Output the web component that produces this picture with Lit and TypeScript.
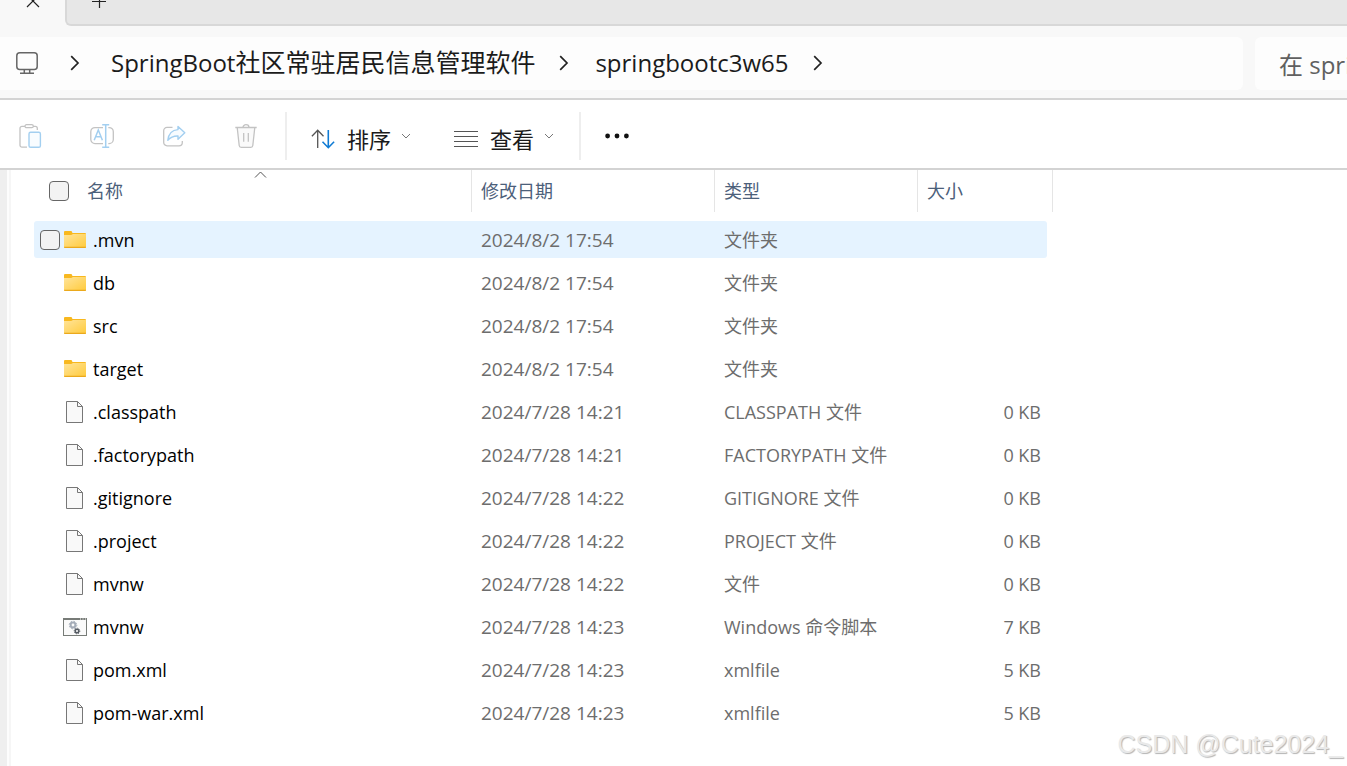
import { LitElement, html, css, svg, nothing } from "lit";
import { customElement, property } from "lit/decorators.js";

type Kind = "folder" | "file" | "script";

interface Entry {
  name: string;
  kind: Kind;
  modified: string;
  type: string;
  size: string;
  hovered?: boolean;
}

const ENTRIES: Entry[] = [
  { name: ".mvn", kind: "folder", modified: "2024/8/2 17:54", type: "文件夹", size: "", hovered: true },
  { name: "db", kind: "folder", modified: "2024/8/2 17:54", type: "文件夹", size: "" },
  { name: "src", kind: "folder", modified: "2024/8/2 17:54", type: "文件夹", size: "" },
  { name: "target", kind: "folder", modified: "2024/8/2 17:54", type: "文件夹", size: "" },
  { name: ".classpath", kind: "file", modified: "2024/7/28 14:21", type: "CLASSPATH 文件", size: "0 KB" },
  { name: ".factorypath", kind: "file", modified: "2024/7/28 14:21", type: "FACTORYPATH 文件", size: "0 KB" },
  { name: ".gitignore", kind: "file", modified: "2024/7/28 14:22", type: "GITIGNORE 文件", size: "0 KB" },
  { name: ".project", kind: "file", modified: "2024/7/28 14:22", type: "PROJECT 文件", size: "0 KB" },
  { name: "mvnw", kind: "file", modified: "2024/7/28 14:22", type: "文件", size: "0 KB" },
  { name: "mvnw", kind: "script", modified: "2024/7/28 14:23", type: "Windows 命令脚本", size: "7 KB" },
  { name: "pom.xml", kind: "file", modified: "2024/7/28 14:23", type: "xmlfile", size: "5 KB" },
  { name: "pom-war.xml", kind: "file", modified: "2024/7/28 14:23", type: "xmlfile", size: "5 KB" },
];

const GRAY = "#c3c3c3";
const BLUE = "#a3cff0";

const icon = (w: number, h: number, body: unknown) =>
  html`<svg width=${w} height=${h} viewBox="0 0 ${w} ${h}" fill="none" aria-hidden="true">${body}</svg>`;

const folderIcon = icon(22, 17, svg`
  <defs><linearGradient id="f" x1="0" y1="0" x2="1" y2="1">
    <stop offset="0" stop-color="#ffe49a"/><stop offset="1" stop-color="#ffcb3d"/>
  </linearGradient></defs>
  <path d="M0 4V1a1 1 0 0 1 1-1h6.5L8.5 2H21a1 1 0 0 1 1 1V4z" fill="#f8b81f"/>
  <path d="M0 4h7.2L9 3h13v13.5H0z" fill="url(#f)"/>
  <path d="M0 15.8h22v.4a.8.8 0 0 1-.8.8H.8a.8.8 0 0 1-.8-.8z" fill="#eba91c"/>`);

const fileIcon = icon(18, 22, svg`
  <path d="M.5.5h11l5 5v16H.5z" fill="#f9f9f9" stroke="#777"/>
  <path d="M11.5.5v5h5" stroke="#777"/>`);

const scriptIcon = icon(24, 18, svg`
  <rect x=".5" y=".5" width="23" height="17" fill="#fafafa" stroke="#777b77"/>
  <path d="M0 1h24" stroke="#777b77" stroke-width="2"/>
  <path d="M17 1h1M19.5 1h1M22 1h1" stroke="#fff"/>
  <circle cx="10" cy="7" r="2.4" stroke="#a4acb8" stroke-width="2"/>
  <circle cx="10" cy="7" r="3.8" stroke="#a4acb8" stroke-dasharray="1.5 1.5"/>
  <circle cx="14" cy="13" r="1.8" stroke="#555b63" stroke-width="1.5"/>
  <circle cx="14" cy="13" r="2.8" stroke="#555b63" stroke-dasharray="1.1 1.1"/>`);

const ICONS: Record<Kind, unknown> = { folder: folderIcon, file: fileIcon, script: scriptIcon };

const crumbChevron = icon(10, 16, svg`<path d="M1.2 1.2 8 8l-6.8 6.8" stroke="#222" stroke-width="1.7"/>`);
const dropChevron = icon(10, 6, svg`<path d="M1 1l4 4 4-4" stroke="#777"/>`);

const pasteIcon = icon(24, 24, svg`
  <path d="M9 23.2H4a2 2 0 0 1-2-2V4.3a2 2 0 0 1 2-2h3M15 2.3h2.3a2 2 0 0 1 2 2V6" stroke=${GRAY} stroke-width="1.3"/>
  <rect x="7" y=".7" width="8.3" height="3" rx="1.5" stroke=${GRAY} stroke-width="1.3"/>
  <rect x="11" y="8.3" width="11.4" height="15" rx="1.6" stroke=${BLUE} stroke-width="1.4" fill="#f8fcff"/>`);

const renameIcon = icon(24, 24, svg`
  <path d="M13 3.6H5a4.2 4.2 0 0 0-4.2 4.2v7.6A4.2 4.2 0 0 0 5 19.6h8M18.3 3.6h.8a4.2 4.2 0 0 1 4.2 4.2v7.6a4.2 4.2 0 0 1-4.2 4.2h-.8" stroke=${GRAY} stroke-width="1.3"/>
  <path d="M15.7.7v22.6M12.2.7h7M12.2 23.3h7M4.2 16.2 8.3 6l4.1 10.2M5.6 12.8h5.4" stroke=${BLUE} stroke-width="1.5"/>`);

const shareIcon = icon(24, 24, svg`
  <path d="M10.5 3.4H5a3.3 3.3 0 0 0-3.3 3.3v11.8A3.3 3.3 0 0 0 5 21.8h12a3.3 3.3 0 0 0 3.3-3.3V17" stroke=${GRAY} stroke-width="1.3"/>
  <path d="M16 2.4 22.8 8.8 16 15.2V12c-4.2-.2-7.3 1-10.2 4.3C6.5 10 10 6 16 5.6z" stroke=${BLUE} stroke-width="1.4" stroke-linejoin="round" fill="#f8fcff"/>`);

const trashIcon = icon(24, 24, svg`
  <path d="M3.2 3.5 5.2 21.5a2 2 0 0 0 2 1.8h9.6a2 2 0 0 0 2-1.8L20.8 3.5" fill="#fafafa"/>
  <path d="M1.3 3.5h21.4M3.2 3.5 5.2 21.5a2 2 0 0 0 2 1.8h9.6a2 2 0 0 0 2-1.8L20.8 3.5M9 3.5a3 2.8 0 0 1 6 0M9.7 9v8.8M14.3 9v8.8" stroke=${GRAY} stroke-width="1.3"/>`);

const sortIcon = icon(24, 20, svg`
  <path d="M6.7 19V1.2M.9 7.2l5.8-6 5.8 6" stroke="#555" stroke-width="1.3"/>
  <path d="M17.3 1v17.6M11.5 12.7l5.8 6 5.8-6" stroke="#0f7bd4" stroke-width="1.6"/>`);

const listIcon = icon(24, 16, svg`
  <path d="M0 .5h24M0 5.5h24M0 10.5h24M0 15.5h24" stroke="#555"/>`);

const moreIcon = icon(24, 6, svg`
  <circle cx="2.6" cy="3" r="2.4" fill="#111"/><circle cx="12" cy="3" r="2.4" fill="#111"/><circle cx="21.4" cy="3" r="2.4" fill="#111"/>`);

const monitorIcon = icon(22, 22, svg`
  <rect x=".8" y=".8" width="20.4" height="16.6" rx="3" stroke="#666" stroke-width="1.5"/>
  <path d="M8.3 17.5v3.5M13.7 17.5v3.5M4 21.2h14" stroke="#666" stroke-width="1.5"/>`);

const closeIcon = icon(14, 14, svg`<path d="M1 1l12 12M13 1 1 13" stroke="#222" stroke-width="1.2"/>`);
const plusIcon = icon(14, 14, svg`<path d="M0 7.5h14M7.5 0v14" stroke="#222" stroke-width="1.2"/>`);

const controls = css`
  :host, * { box-sizing: border-box; }
  svg { display: block; flex: none; }
  button {
    display: flex; align-items: center; margin: 0; padding: 0;
    border: 0; background: none; font: inherit; color: inherit;
  }
`;

@customElement("explorer-tabs")
class ExplorerTabs extends LitElement {
  static styles = [controls, css`
    :host { display: flex; height: 26px; background: #f8f8f8; }
    .current { flex: 0 0 65px; display: flex; padding-left: 26px; overflow: hidden; }
    .rest {
      flex: 1; display: flex; padding-left: 25px; overflow: hidden;
      background: #e7e7e7; border: 2px solid #d8d8d8;
      border-width: 0 0 2px 2px; border-radius: 0 0 0 6px;
    }
    button { height: 14px; margin-top: -6px; }
  `];

  render() {
    return html`
      <div class="current"><button aria-label="关闭">${closeIcon}</button></div>
      <div class="rest"><button aria-label="新建">${plusIcon}</button></div>`;
  }
}

@customElement("explorer-address")
class ExplorerAddress extends LitElement {
  static styles = [controls, css`
    :host {
      display: flex; gap: 12px; padding: 11px 0 8px;
      background: #f8f8f8; border-bottom: 2px solid #d3d3d3;
      font-size: 24px; line-height: 33px; color: #1b1b1b;
    }
    .path {
      flex: 1; min-width: 0; height: 53px; display: flex; align-items: center;
      padding: 0 0 2px 16px; background: #fdfdfd; border-radius: 0 6px 6px 0;
      white-space: nowrap;
    }
    .path a { color: inherit; text-decoration: none; }
    .pc { margin-right: 32px; }
    .crumb { margin: 0 24px 0 26px; }
    .pc + svg + .crumb { margin-left: 31px; }
    .han { font-size: 25px; }
    .search {
      flex: 0 0 92px; width: 92px; height: 53px; padding: 2px 0 0 24px;
      border: 0; border-radius: 6px 0 0 6px; background: #fdfdfd;
      font: inherit; outline: 0;
    }
    .search::placeholder { color: #606060; opacity: 1; }
  `];

  render() {
    return html`
      <nav class="path" aria-label="地址">
        <a class="pc" href="#" aria-label="此电脑">${monitorIcon}</a>
        ${crumbChevron}<a class="crumb" href="#">SpringBoot<span class="han">社区常驻居民信息管理软件</span></a>
        ${crumbChevron}<a class="crumb" href="#">springbootc3w65</a>
        ${crumbChevron}
      </nav>
      <input class="search" type="text" aria-label="搜索" placeholder="在 springbootc3w65 中搜索">`;
  }
}

@customElement("explorer-toolbar")
class ExplorerToolbar extends LitElement {
  static styles = [controls, css`
    :host {
      display: flex; align-items: center; height: 70px; padding: 4px 0 0 18px;
      border-bottom: 2px solid #d3d3d3; background: #fff;
      font-size: 22px; line-height: 32px; color: #1b1b1b;
    }
    .actions { display: flex; gap: 48px; padding-right: 3px; }
    .separator { width: 2px; height: 48px; margin: 0 24px; background: #eee; }
    .menus { display: flex; gap: 43px; padding-right: 1px; }
    .menu { height: 40px; gap: 12px; padding-top: 6px; }
    .menu svg:last-child { margin: 0 0 6px -2px; }
  `];

  render() {
    return html`
      <div class="actions">
        <button aria-label="粘贴" disabled>${pasteIcon}</button>
        <button aria-label="重命名" disabled>${renameIcon}</button>
        <button aria-label="共享" disabled>${shareIcon}</button>
        <button aria-label="删除" disabled>${trashIcon}</button>
      </div>
      <span class="separator"></span>
      <div class="menus">
        <button class="menu">${sortIcon}<span>排序</span>${dropChevron}</button>
        <button class="menu">${listIcon}<span>查看</span>${dropChevron}</button>
      </div>
      <span class="separator"></span>
      <button aria-label="查看更多">${moreIcon}</button>`;
  }
}

@customElement("explorer-files")
class ExplorerFiles extends LitElement {
  @property({ attribute: false }) entries: Entry[] = [];

  static styles = [controls, css`
    :host { display: block; padding-left: 23px; }
    table {
      width: 1013px; margin-top: -6px; table-layout: fixed;
      border-collapse: separate; border-spacing: 0 6px;
      font-size: 18px; line-height: 25px; color: #6d6d6d;
    }
    th, td { padding: 0; text-align: left; font-weight: inherit; }
    th { height: 45px; vertical-align: top; color: #4c607a; }
    .name { width: 438px; }
    .date { width: 243px; }
    .type { width: 203px; }
    .head {
      position: relative; display: flex; align-items: center; height: 42px;
      padding-left: 9px; border-right: 1px solid #e5e5e5;
    }
    .name .head { padding-left: 15px; gap: 18px; }
    .size .head { margin-right: -6px; }
    .sorted { position: absolute; top: 1px; left: 220px; }
    td { height: 37px; padding-top: 2px; vertical-align: middle; white-space: nowrap; }
    td:first-child { padding-top: 0; }
    td:not(:first-child) { padding-left: 9px; }
    td:nth-child(2) { font-size: 19px; }
    td:last-child { padding-right: 6px; text-align: right; }
    .hovered td { background: #e5f3ff; }
    .hovered td:first-child { border-radius: 3px 0 0 3px; }
    .hovered td:last-child { border-radius: 0 3px 3px 0; }
    .entry { display: grid; grid-template-columns: 23px 24px auto; align-items: center; padding-left: 6px; color: #000; }
    .entry svg { justify-self: center; }
    .entry label { padding: 2px 0 0 6px; }
    input {
      appearance: none; width: 20px; height: 20px; margin: 0;
      border: 1px solid #666; border-radius: 4px; background: #f3f3f3;
    }
  `];

  render() {
    return html`
      <table>
        <thead>
          <tr>
            <th class="name"><div class="head">
              <input type="checkbox" id="all"><label for="all">名称</label>
              <span class="sorted">${icon(13, 7, svg`<path d="M1 6.5l5.5-5.5 5.5 5.5" stroke="#555"/>`)}</span>
            </div></th>
            <th class="date"><div class="head">修改日期</div></th>
            <th class="type"><div class="head">类型</div></th>
            <th class="size"><div class="head">大小</div></th>
          </tr>
        </thead>
        <tbody>
          ${this.entries.map((e, i) => html`
            <tr class=${e.hovered ? "hovered" : nothing}>
              <td><div class="entry">
                ${e.hovered ? html`<input type="checkbox" id="row${i}">` : html`<span></span>`}
                ${ICONS[e.kind]}
                ${e.hovered ? html`<label for="row${i}">${e.name}</label>` : html`<label>${e.name}</label>`}
              </div></td>
              <td>${e.modified}</td>
              <td>${e.type}</td>
              <td>${e.size}</td>
            </tr>`)}
        </tbody>
      </table>`;
  }
}

@customElement("app-root")
class AppRoot extends LitElement {
  static styles = css`
    :host {
      position: relative; display: flex; flex-direction: column;
      min-height: 100vh; overflow: hidden; background: #fff;
      font-family: "Open Sans", "Noto Sans CJK SC", sans-serif;
    }
    .content { flex: 1; display: flex; }
    .edge {
      box-sizing: border-box; flex: 0 0 11px; background: #fdfdfd;
      border-left: 7px solid #efefef; border-right: 2px solid #f6f6f6;
    }
    .watermark {
      position: absolute; right: 4px; bottom: 8px;
      font: 25px/28px "Liberation Sans", sans-serif;
      color: #e9e9e9; text-shadow: 1px 1px 1px #b4b4b4;
    }
  `;

  render() {
    return html`
      <explorer-tabs></explorer-tabs>
      <explorer-address></explorer-address>
      <explorer-toolbar></explorer-toolbar>
      <div class="content">
        <div class="edge"></div>
        <explorer-files .entries=${ENTRIES}></explorer-files>
      </div>
      <div class="watermark">CSDN @Cute2024_</div>`;
  }
}
